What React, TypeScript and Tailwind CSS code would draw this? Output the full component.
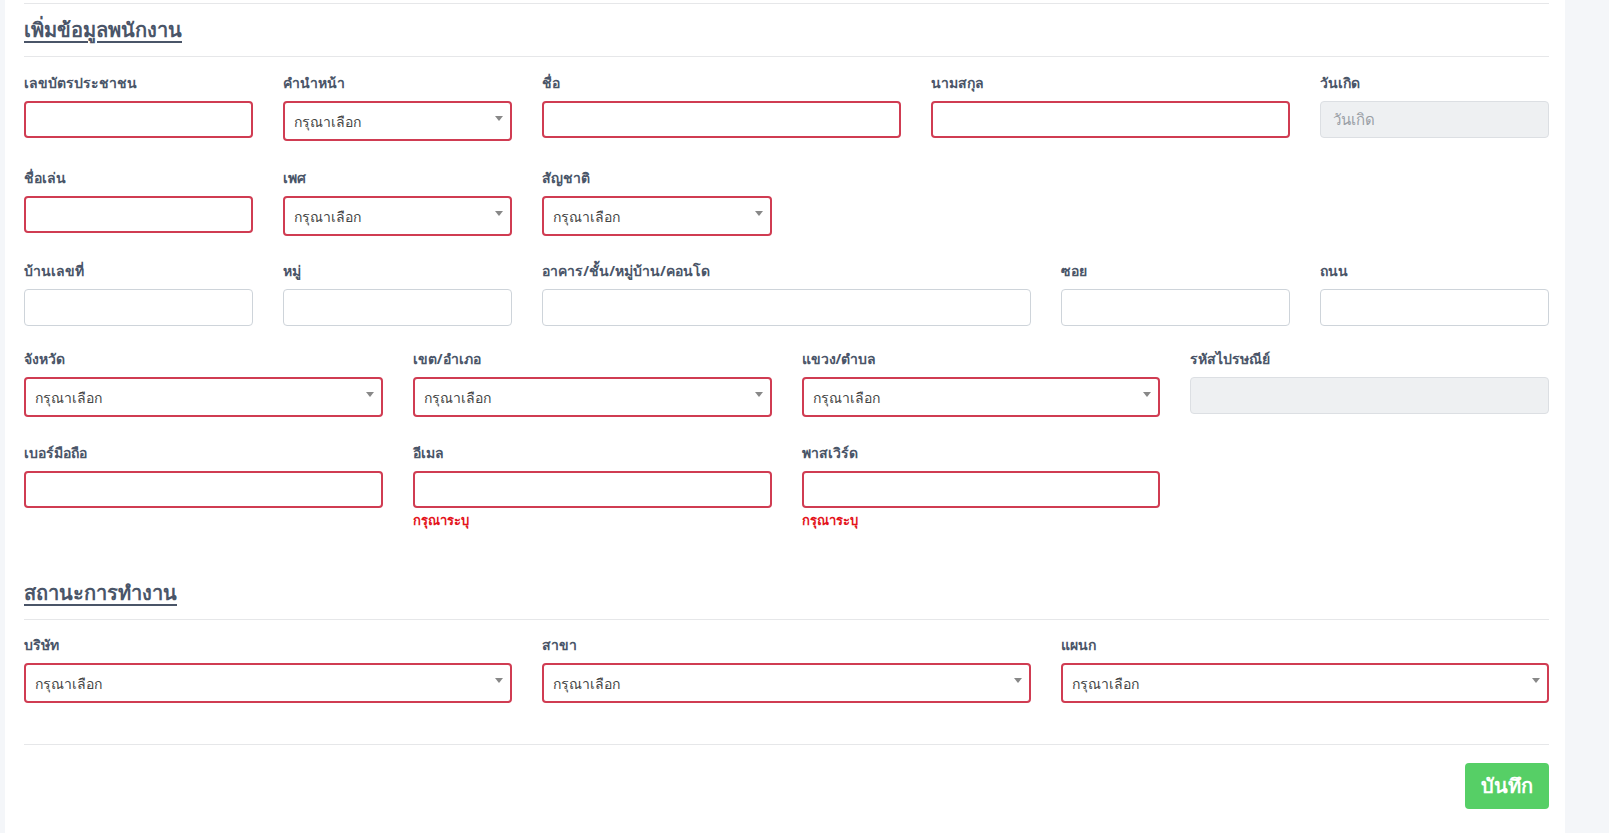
import React from 'react'

const font = { fontFamily: '"Noto Sans", "DejaVu Sans", Tahoma, sans-serif' }

type Field = {
  label: string
  span: string
  kind: 'input' | 'select' | 'disabled'
  invalid?: boolean
  placeholder?: string
  error?: string
}

function Control({ f }: { f: Field }) {
  if (f.kind === 'select') {
    return (
      <div className="relative flex h-[40px] items-center rounded-[4px] border-2 border-[#d03c52] bg-white pl-[9px] text-[14px] text-[#444]">
        กรุณาเลือก
        <span className="absolute right-[7px] top-[13px] h-0 w-0 border-x-[4px] border-t-[5px] border-x-transparent border-t-[#888]" />
      </div>
    )
  }
  if (f.kind === 'disabled') {
    return (
      <div className="flex h-[37px] items-center rounded-[4px] border border-[#dcdfe3] bg-[#eef0f2] pl-[12px] text-[15px] text-[#9a9fa6]">
        {f.placeholder}
      </div>
    )
  }
  return (
    <div
      className={
        f.invalid
          ? 'h-[37px] rounded-[4px] border-2 border-[#d03c52] bg-white'
          : 'h-[37px] rounded-[4px] border border-[#ced4da] bg-white'
      }
    />
  )
}

function Row({ fields, mb }: { fields: Field[]; mb: string }) {
  return (
    <div className={`grid grid-cols-12 gap-x-[30px] ${mb}`}>
      {fields.map((f) => (
        <div key={f.label} className={f.span}>
          <div className="mb-[8px] h-[21px] text-[14px] font-bold leading-[21px] text-[#4a5568]">{f.label}</div>
          <Control f={f} />
          {f.error && (
            <div className="mt-[3px] text-[13px] font-bold leading-[18px] text-[#e3141b]">{f.error}</div>
          )}
        </div>
      ))}
    </div>
  )
}

function Heading({ children }: { children: React.ReactNode }) {
  return (
    <div className="h-[30px] text-[20px] font-bold leading-[30px] text-[#4a5568] underline underline-offset-[4px]">
      {children}
    </div>
  )
}

export default function App() {
  return (
    <div className="min-h-screen bg-[#f4f6f9] pl-[5px] pr-[44px]" style={font}>
      <div className="bg-white pl-[19px] pr-[16px] pt-[3px] pb-[25px]">
        <div className="border-t border-[#e6e7e9]" />
        <div className="mt-[11px]">
          <Heading>เพิ่มข้อมูลพนักงาน</Heading>
        </div>
        <div className="mt-[11px] border-t border-[#e6e7e9]" />
        <div className="mt-[15px]">
          <Row
            mb="mb-[26px]"
            fields={[
              { label: 'เลขบัตรประชาชน', span: 'col-span-2', kind: 'input', invalid: true },
              { label: 'คำนำหน้า', span: 'col-span-2', kind: 'select' },
              { label: 'ชื่อ', span: 'col-span-3', kind: 'input', invalid: true },
              { label: 'นามสกุล', span: 'col-span-3', kind: 'input', invalid: true },
              { label: 'วันเกิด', span: 'col-span-2', kind: 'disabled', placeholder: 'วันเกิด' },
            ]}
          />
          <Row
            mb="mb-[24px]"
            fields={[
              { label: 'ชื่อเล่น', span: 'col-span-2', kind: 'input', invalid: true },
              { label: 'เพศ', span: 'col-span-2', kind: 'select' },
              { label: 'สัญชาติ', span: 'col-span-2', kind: 'select' },
            ]}
          />
          <Row
            mb="mb-[22px]"
            fields={[
              { label: 'บ้านเลขที่', span: 'col-span-2', kind: 'input' },
              { label: 'หมู่', span: 'col-span-2', kind: 'input' },
              { label: 'อาคาร/ชั้น/หมู่บ้าน/คอนโด', span: 'col-span-4', kind: 'input' },
              { label: 'ซอย', span: 'col-span-2', kind: 'input' },
              { label: 'ถนน', span: 'col-span-2', kind: 'input' },
            ]}
          />
          <Row
            mb="mb-[25px]"
            fields={[
              { label: 'จังหวัด', span: 'col-span-3', kind: 'select' },
              { label: 'เขต/อำเภอ', span: 'col-span-3', kind: 'select' },
              { label: 'แขวง/ตำบล', span: 'col-span-3', kind: 'select' },
              { label: 'รหัสไปรษณีย์', span: 'col-span-3', kind: 'disabled', placeholder: '' },
            ]}
          />
          <Row
            mb="mb-[49px]"
            fields={[
              { label: 'เบอร์มือถือ', span: 'col-span-3', kind: 'input', invalid: true },
              { label: 'อีเมล', span: 'col-span-3', kind: 'input', invalid: true, error: 'กรุณาระบุ' },
              { label: 'พาสเวิร์ด', span: 'col-span-3', kind: 'input', invalid: true, error: 'กรุณาระบุ' },
            ]}
          />
        </div>
        <Heading>สถานะการทำงาน</Heading>
        <div className="mt-[11px] border-t border-[#e6e7e9]" />
        <div className="mt-[14px]">
          <Row
            mb="mb-[41px]"
            fields={[
              { label: 'บริษัท', span: 'col-span-4', kind: 'select' },
              { label: 'สาขา', span: 'col-span-4', kind: 'select' },
              { label: 'แผนก', span: 'col-span-4', kind: 'select' },
            ]}
          />
        </div>
        <div className="border-t border-[#e6e7e9]" />
        <div className="mt-[18px] flex justify-end">
          <button className="h-[46px] rounded-[4px] bg-[#56cf66] px-[16px] text-[20px] font-semibold text-white">
            บันทึก
          </button>
        </div>
      </div>
    </div>
  )
}
